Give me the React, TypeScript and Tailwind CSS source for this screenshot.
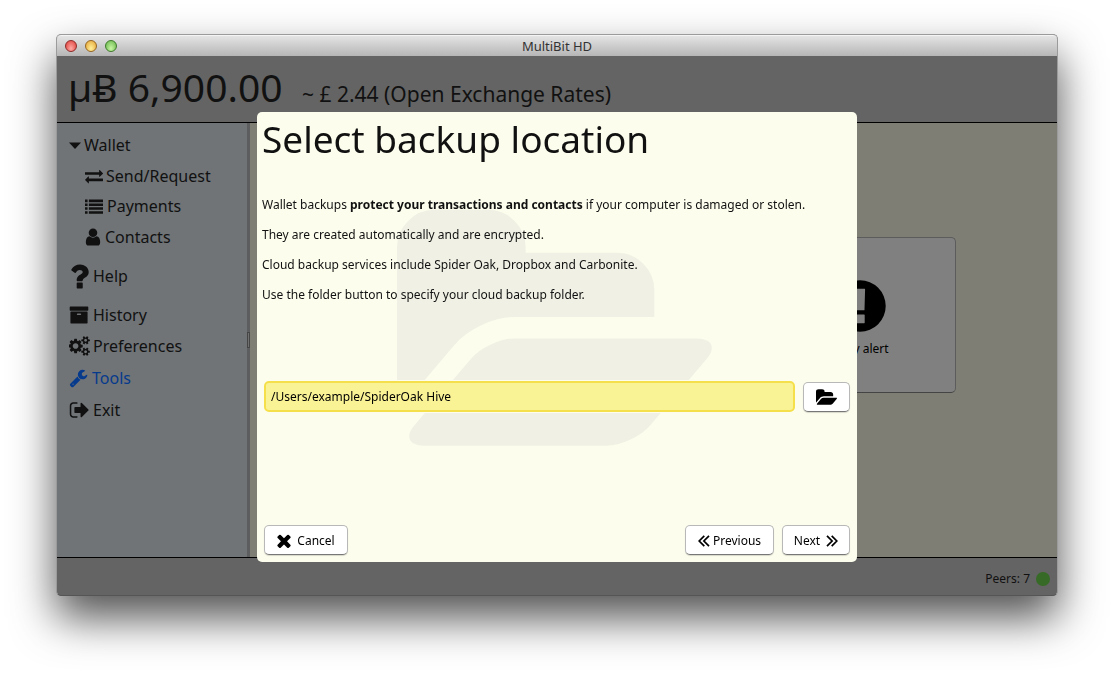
import type { ReactNode } from "react";

const paths = {
  folder:
    "M1879 952q0 31-31 66l-336 396q-43 51-120.5 86.5t-143.5 35.5h-1088q-34 0-60.5-13t-26.5-43q0-31 31-66l336-396q43-51 120.5-86.5t143.5-35.5h1088q34 0 60.5 13t26.5 43zm-343-344v160h-832q-94 0-197 47.5t-164 119.5l-337 396-5 6q0-4-.5-12.5t-.5-12.5v-960q0-92 66-158t158-66h320q92 0 158 66t66 158v32h544q92 0 158 66t66 158z",
  times:
    "M1490 1322q0 40-28 68l-136 136q-28 28-68 28t-68-28l-294-294-294 294q-28 28-68 28t-68-28l-136-136q-28-28-28-68t28-68l294-294-294-294q-28-28-28-68t28-68l136-136q28-28 68-28t68 28l294 294 294-294q28-28 68-28t68 28l136 136q28 28 28 68t-28 68l-294 294 294 294q28 28 28 68z",
  exchange:
    "M1792 1184v192q0 13-9.5 22.5t-22.5 9.5h-1376v192q0 13-9.5 22.5t-22.5 9.5q-12 0-24-10l-319-320q-9-9-9-22 0-14 9-23l320-320q9-9 23-9 13 0 22.5 9.5t9.5 22.5v192h1376q13 0 22.5 9.5t9.5 22.5zm0-544q0 14-9 23l-320 320q-9 9-23 9-13 0-22.5-9.5t-9.5-22.5v-192h-1376q-13 0-22.5-9.5t-9.5-22.5v-192q0-13 9.5-22.5t22.5-9.5h1376v-192q0-14 9-23t23-9q12 0 24 10l319 319q9 9 9 23z",
  list:
    "M0 256h256v256h-256zM0 640h256v256h-256zM0 1024h256v256h-256zM0 1408h256v256h-256zM384 256h1408v256h-1408zM384 640h1408v256h-1408zM384 1024h1408v256h-1408zM384 1408h1408v256h-1408z",
  user:
    "M1536 1399q0 109-62.5 187t-150.5 78h-854q-88 0-150.5-78t-62.5-187q0-85 8.5-160.5t31.5-152 58.5-131 94-89 134.5-34.5q131 128 313 128t313-128q76 0 134.5 34.5t94 89 58.5 131 31.5 152 8.5 160.5zm-256-887q0 159-112.5 271.5t-271.5 112.5-271.5-112.5-112.5-271.5 112.5-271.5 271.5-112.5 271.5 112.5 112.5 271.5z",
  question:
    "M1088 1256v240q0 16-12 28t-28 12h-240q-16 0-28-12t-12-28v-240q0-16 12-28t28-12h240q16 0 28 12t12 28zm316-600q0 54-15.5 101t-35 76.5-55 59.5-57.5 43.5-61 35.5q-41 23-68.5 65t-27.5 67q0 17-12 32.5t-28 15.5h-240q-15 0-25.5-18.5t-10.5-37.5v-45q0-83 65-156.5t143-108.5q59-27 84-56t25-76q0-42-46.5-74t-107.5-32q-65 0-108 29-35 25-107 115-13 16-31 16-12 0-25-8l-164-125q-13-10-15.5-25t5.5-28q160-266 464-266 80 0 161 31t146 83 106 127.5 41 158.5z",
  archive:
    "M1088 832q0-26-19-45t-45-19h-256q-26 0-45 19t-19 45 19 45 45 19h256q26 0 45-19t19-45zm576-192v960q0 26-19 45t-45 19h-1408q-26 0-45-19t-19-45v-960q0-26 19-45t45-19h1408q26 0 45 19t19 45zm64-448v256q0 26-19 45t-45 19h-1536q-26 0-45-19t-19-45v-256q0-26 19-45t45-19h1536q26 0 45 19t19 45z",
  cogs:
    "M832 896q0-106-75-181t-181-75-181 75-75 181 75 181 181 75 181-75 75-181zm768 512q0-52-38-90t-90-38-90 38-38 90q0 53 37.5 90.5t90.5 37.5 90.5-37.5 37.5-90.5zm0-1024q0-52-38-90t-90-38-90 38-38 90q0 53 37.5 90.5t90.5 37.5 90.5-37.5 37.5-90.5zm-384 421v185q0 10-7 19.5t-16 10.5l-155 24q-11 35-32 76 34 48 90 115 7 11 7 20 0 12-7 19-23 30-82.5 89.5t-78.5 59.5q-11 0-21-7l-115-90q-37 19-77 31-11 108-23 155-7 24-30 24h-186q-11 0-20-7.5t-10-17.5l-23-153q-34-10-75-31l-118 89q-7 7-20 7-11 0-21-8-144-133-144-160 0-9 7-19 10-14 41-53t47-61q-23-44-35-82l-152-24q-10-1-17-9.5t-7-19.5v-185q0-10 7-19.5t16-10.5l155-24q11-35 32-76-34-48-90-115-7-11-7-20 0-12 7-20 22-30 82-89t79-59q11 0 21 7l115 90q34-18 77-32 11-108 23-154 7-24 30-24h186q11 0 20 7.5t10 17.5l23 153q34 10 75 31l118-89q8-7 20-7 11 0 21 8 144 133 144 160 0 8-7 19-12 16-42 54t-45 60q23 48 34 82l152 23q10 2 17 10.5t7 19.5zm640 533v140q0 16-149 31-12 27-30 52 51 113 51 138 0 4-4 7-122 71-124 71-8 0-46-47t-52-68q-20 2-30 2t-30-2q-14 21-52 68t-46 47q-2 0-124-71-4-3-4-7 0-25 51-138-18-25-30-52-149-15-149-31v-140q0-16 149-31 13-29 30-52-51-113-51-138 0-4 4-7 4-2 35-20t59-34 30-16q8 0 46 46.5t52 67.5q20-2 30-2t30 2q51-71 92-112l6-2q4 0 124 70 4 3 4 7 0 25-51 138 17 23 30 52 149 15 149 31zm0-1024v140q0 16-149 31-12 27-30 52 51 113 51 138 0 4-4 7-122 71-124 71-8 0-46-47t-52-68q-20 2-30 2t-30-2q-14 21-52 68t-46 47q-2 0-124-71-4-3-4-7 0-25 51-138-18-25-30-52-149-15-149-31v-140q0-16 149-31 13-29 30-52-51-113-51-138 0-4 4-7 4-2 35-20t59-34 30-16q8 0 46 46.5t52 67.5q20-2 30-2t30 2q51-71 92-112l6-2q4 0 124 70 4 3 4 7 0 25-51 138 17 23 30 52 149 15 149 31z",
  wrench:
    "M448 1472q0-26-19-45t-45-19-45 19-19 45 19 45 45 19 45-19 19-45zm644-420l-682 682q-37 37-90 37-52 0-91-37l-106-108q-38-36-38-90 0-53 38-91l681-681q39 98 114.5 173.5t173.5 114.5zm634-435q0 39-23 106-47 134-164.5 217.5t-258.5 83.5q-185 0-316.5-131.5t-131.5-316.5 131.5-316.5 316.5-131.5q58 0 121.5 16.5t107.5 46.5q16 11 16 28t-16 28l-293 169v224l193 107q5-3 79-48.5t135.5-81 70.5-35.5q15 0 23.5 10t8.5 25z",
  exit:
    "M704 1440q0 4 1 20t.5 26.5-3 23.5-10 19.5-20.5 6.5h-320q-119 0-203.5-84.5t-84.5-203.5v-704q0-119 84.5-203.5t203.5-84.5h320q13 0 22.5 9.5t9.5 22.5q0 4 1 20t.5 26.5-3 23.5-10 19.5-20.5 6.5h-320q-66 0-113 47t-47 113v704q0 66 47 113t113 47h312l11.5 1 11.5 3 8 5.500 7 9 2 13.500zm928-544q0 26-19 45l-544 544q-19 19-45 19t-45-19-19-45v-288h-448q-26 0-45-19t-19-45v-384q0-26 19-45t45-19h448v-288q0-26 19-45t45-19 45 19l544 544q19 19 19 45z",
  alert:
    "M896 128a768 768 0 1 1 0 1536a768 768 0 1 1 0-1536zM752 384q-8 0-8 10l18 620q0 10 10 10h248q10 0 10-10l18-620q0-10-8-10zM770 1152q-14 0-14 14v228q0 14 14 14h252q14 0 14-14v-228q0-14-14-14z",
};

function Icon({ name, className, viewBox = "0 0 1792 1792" }: { name: keyof typeof paths; className: string; viewBox?: string }) {
  return (
    <svg viewBox={viewBox} fill="currentColor" fillRule="evenodd" aria-hidden="true" className={"shrink-0 " + className}>
      <path d={paths[name]} />
    </svg>
  );
}

function Chevrons({ left = false }: { left?: boolean }) {
  return (
    <svg viewBox="0 0 12 12" fill="none" stroke="currentColor" strokeWidth="1.7" aria-hidden="true" className="size-3 shrink-0">
      <path d={left ? "M6.3 .8L1.2 6l5.1 5.2M11 .8L5.9 6l5.1 5.2" : "M1 .8L6.1 6L1 11.2M5.7 .8L10.8 6l-5.1 5.2"} />
    </svg>
  );
}

function Light({ color }: { color: string }) {
  return <span className={"size-3 rounded-full border " + color} />;
}

function NavItem({ icon, label, className }: { icon: ReactNode; label: string; className: string }) {
  return (
    <li>
      <a href="#" className={"flex items-center " + className}>
        {icon}
        <span>{label}</span>
      </a>
    </li>
  );
}

const button =
  "flex h-[30px] items-center justify-center rounded-[5px] border border-[#b8b8b8] border-b-[#777777] bg-white pt-px text-black shadow-[0_1px_1px_rgba(0,0,0,0.15)]";

export default function App() {
  return (
    <div className="flex min-h-screen flex-col bg-white px-14 pt-[34px] pb-[78px] font-['Noto_Sans','Open_Sans',sans-serif] text-xs text-[#111111]">
      <div className="flex flex-1 flex-col rounded-[5px] border border-[#9b9b9b] border-b-[#555555] bg-[#646464] shadow-[0_22px_44px_rgba(0,0,0,0.68)]">
        <div className="grid h-[21px] grid-cols-3 items-center rounded-t-[4px] border-t border-[#f4f4f4] bg-linear-to-b from-[#e4e4e4] to-[#b6b6b6] px-2">
          <div className="flex gap-2">
            <Light color="border-[#8d2b28] bg-radial-[at_50%_75%] from-[#ffaaa5] to-[#dd3a35]" />
            <Light color="border-[#956522] bg-radial-[at_50%_75%] from-[#fff19a] to-[#e4a030]" />
            <Light color="border-[#3e7a2a] bg-radial-[at_50%_75%] from-[#c9f6a4] to-[#63b347]" />
          </div>
          <div className="text-center text-[13px] leading-4 text-[#333333]">MultiBit HD</div>
        </div>

        <header className="flex h-[67px] items-baseline gap-4 border-b border-black px-[11px] pt-[6px]">
          <span className="min-w-[218px] text-[39px] leading-[50px]">µɃ 6,900.00</span>
          <span className="text-[21px]">~ £ 2.44 (Open Exchange Rates)</span>
        </header>

        <div className="flex flex-1">
          <nav className="w-[190px] bg-[#707477] pt-[7px] pl-3 text-base">
            <ul>
              <NavItem
                className="h-[30px] gap-[3px]"
                label="Wallet"
                icon={
                  <svg viewBox="0 0 12 7" className="h-[7px] w-3" aria-hidden="true">
                    <path d="M0 .5h12L6 7z" fill="currentColor" />
                  </svg>
                }
              />
              <NavItem className="h-[31px] gap-[3px] pl-4" label="Send/Request" icon={<Icon name="exchange" className="size-[18px]" />} />
              <NavItem className="h-[30px] gap-1 pl-4" label="Payments" icon={<Icon name="list" className="size-[18px]" />} />
              <NavItem className="h-[31px] gap-1 pl-4" label="Contacts" icon={<Icon name="user" viewBox="256 0 1280 1792" className="h-5 w-4" />} />
              <NavItem className="h-12 gap-1" label="Help" icon={<Icon name="question" viewBox="360 256 1060 1280" className="h-[25px] w-5" />} />
              <NavItem className="h-[30px] gap-1" label="History" icon={<Icon name="archive" className="size-5" />} />
              <NavItem className="h-8 gap-[3px]" label="Preferences" icon={<Icon name="cogs" viewBox="0 0 1856 1792" className="h-5 w-[21px]" />} />
              <NavItem className="h-8 gap-1 text-[#063a8c]" label="Tools" icon={<Icon name="wrench" className="h-5 w-[19px]" />} />
              <NavItem className="h-8 gap-1" label="Exit" icon={<Icon name="exit" viewBox="0 0 1664 1792" className="h-[22px] w-5" />} />
            </ul>
          </nav>
          <div className="flex w-[3px] items-center bg-[#5c5d5f]">
            <span className="h-4 w-[3px] border border-[#454545] bg-[#707070]" />
          </div>
          <main className="flex flex-1 items-start justify-end bg-[#7e7e74] pt-[114px] pr-[101px]">
            <button className="flex h-[156px] w-48 flex-col items-center rounded-[5px] border border-[#5c5c5c] border-b-[#444444] bg-[#808080] pt-[38px] text-black">
              <Icon name="alert" className="size-15" />
              <span className="mt-[5px]">Copy alert</span>
            </button>
          </main>
        </div>

        <footer className="flex h-[38px] items-center justify-end gap-[6px] border-t border-black pt-1 pr-[7px]">
          <span>Peers: 7</span>
          <span className="size-[14px] rounded-full bg-[#376a26]" />
        </footer>
      </div>

      <div className="fixed inset-0 grid place-items-center">
        <section
          role="dialog"
          aria-labelledby="dialog-title"
          className="relative isolate flex h-[450px] w-[600px] flex-col overflow-hidden rounded-[5px] bg-[#fcfdec] p-[7px] pt-0"
        >
          <Icon name="folder" viewBox="0 0 1880 1792" className="absolute top-[76px] left-[140px] -z-10 h-[301px] w-[315px] text-[#f0f1e4]" />
          <h1 id="dialog-title" className="-mx-0.5 text-[37px] leading-[54px]">
            Select backup location
          </h1>
          <div className="-mx-0.5 mt-6 leading-[30px]">
            <p>
              Wallet backups <b>protect your transactions and contacts</b> if your computer is damaged or stolen.
            </p>
            <p>They are created automatically and are encrypted.</p>
            <p>Cloud backup services include Spider Oak, Dropbox and Carbonite.</p>
            <p>Use the folder button to specify your cloud backup folder.</p>
          </div>
          <div className="mt-[70px] flex items-center gap-2 bg-[#fcfdec] py-px">
            <input
              aria-label="Backup location"
              defaultValue="/Users/example/SpiderOak Hive"
              className="h-[31px] min-w-0 flex-1 rounded-[5px] border-2 border-[#f5e04c] bg-[#faf396] px-[5px] text-black outline-none"
            />
            <button aria-label="Choose folder" className={button + " w-[47px]"}>
              <Icon name="folder" viewBox="0 128 1880 1408" className="h-4 w-[21px]" />
            </button>
          </div>
          <div className="mt-auto flex gap-2">
            <button className={button + " mr-auto w-[84px] gap-[6px]"}>
              <Icon name="times" viewBox="302 302 1188 1252" className="size-[14px]" />
              Cancel
            </button>
            <button className={button + " w-[89px] gap-[3px]"}>
              <Chevrons left />
              Previous
            </button>
            <button className={button + " w-[68px] gap-[6px]"}>
              Next
              <Chevrons />
            </button>
          </div>
        </section>
      </div>
    </div>
  );
}
